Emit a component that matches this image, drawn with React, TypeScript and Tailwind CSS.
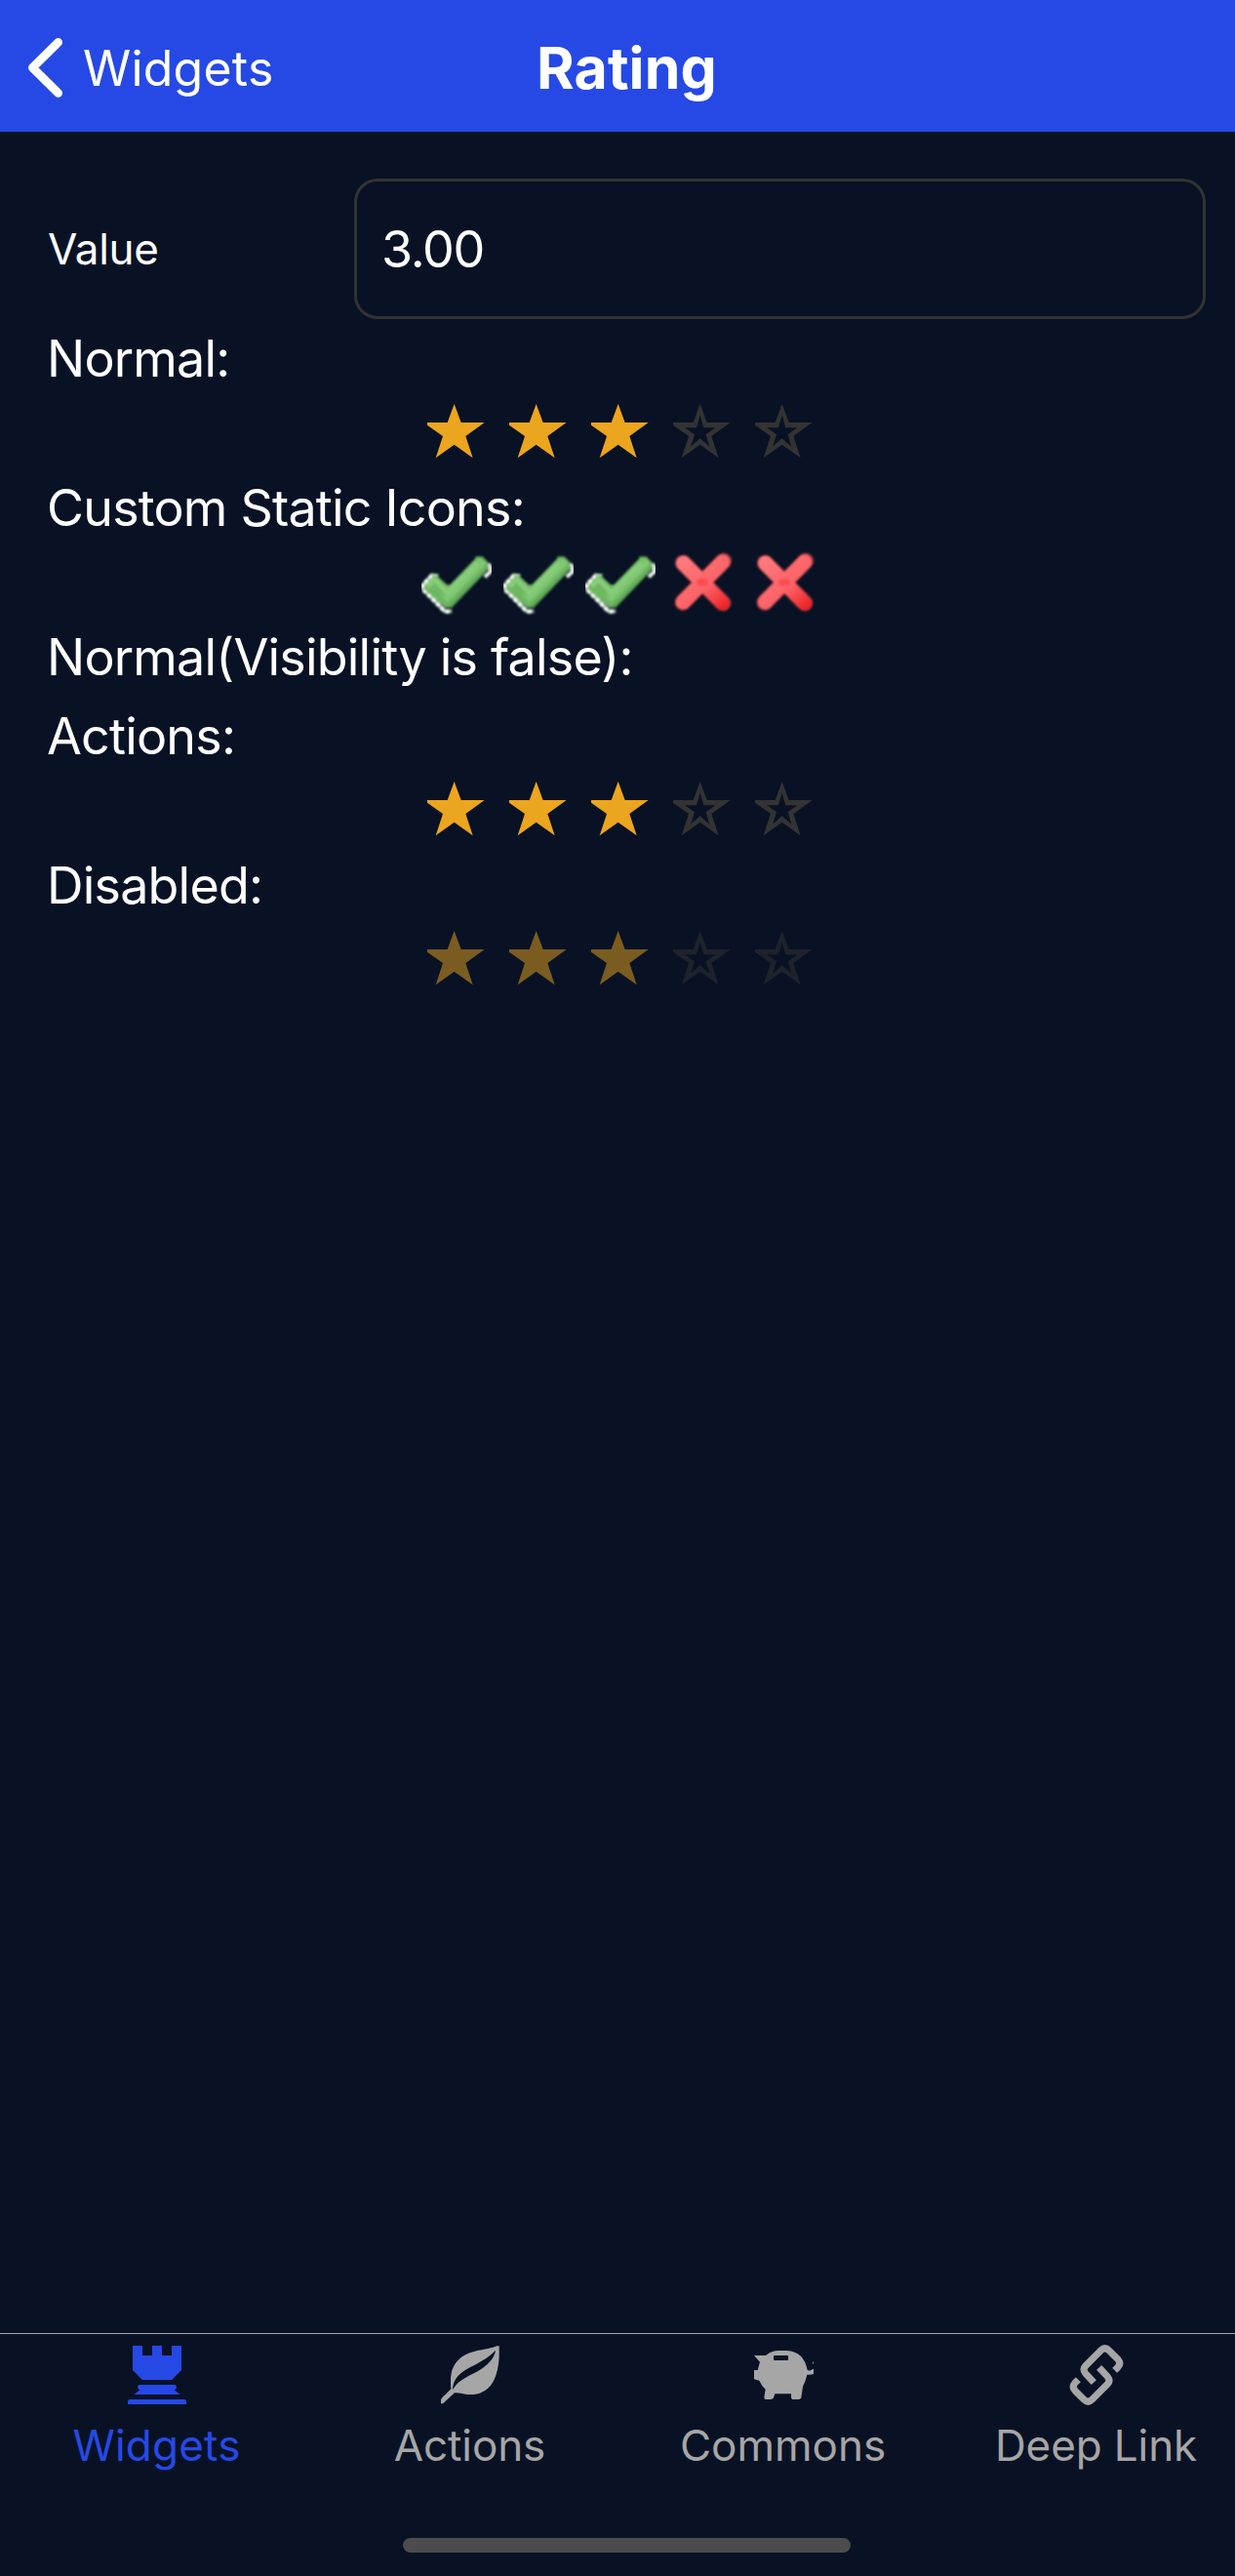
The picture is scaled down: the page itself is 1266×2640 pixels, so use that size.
import type { ReactNode } from 'react';

const STAR_OUTLINE =
  'M197 72L218 129H290L232 171L254 238L197 197L140 238L162 171L114 137V129H176Z';
const STAR_HOLE =
  'M197 106L186 145H150L180 166L168 203L197 178L226 203L215 166L244 145H208Z';

function Star({ filled }: { filled: boolean }) {
  return (
    <svg viewBox="96 54 216 216" className="size-[72px]">
      {filled ? (
        <path d={STAR_OUTLINE} fill="#eca51e" />
      ) : (
        <path d={STAR_OUTLINE + STAR_HOLE} fill="#333333" fillRule="evenodd" />
      )}
    </svg>
  );
}

function Check() {
  return (
    <svg viewBox="96 513 216 216" className="size-[72px]">
      <defs>
        <linearGradient id="tick" gradientUnits="userSpaceOnUse" x1="205" y1="600" x2="252" y2="647">
          <stop offset="0" stopColor="#6fb862" />
          <stop offset="0.45" stopColor="#84cb76" />
          <stop offset="0.75" stopColor="#5fa955" />
          <stop offset="1" stopColor="#357f30" />
        </linearGradient>
        <filter id="tickSoft" filterUnits="userSpaceOnUse" x="96" y="513" width="216" height="216">
          <feGaussianBlur stdDeviation="2.6" />
        </filter>
      </defs>
      <g filter="url(#tickSoft)">
        <path d="M148 600L128 598L102 628V642L168 709H188" fill="none" stroke="#b9d3b5" strokeWidth="11" />
        <path
          d="M128 600L100 628V642L168 710H190"
          fill="none"
          stroke="#ffffff"
          strokeWidth="12"
          strokeDasharray="11 8"
        />
        <path d="M262 545H282L305 568" fill="none" stroke="#5f9a58" strokeWidth="9" />
        <path d="M303 564L308 574V588L291 604" fill="none" stroke="#f4faf3" strokeWidth="11" />
        <path
          d="M104 632L132 600H144L174 628H184L264 545H280L304 570V578L190 698H170L104 642Z"
          fill="url(#tick)"
        />
        <path d="M114 634L136 611L176 652L268 561" fill="none" stroke="#87cd79" strokeWidth="14" />
        <path d="M124 644L174 689" fill="none" stroke="#6bb85f" strokeWidth="14" />
      </g>
    </svg>
  );
}

function Cross() {
  return (
    <svg viewBox="852 513 216 216" className="size-[72px]">
      <defs>
        <linearGradient id="cross" gradientUnits="userSpaceOnUse" x1="890" y1="540" x2="1035" y2="700">
          <stop offset="0" stopColor="#ff7d80" />
          <stop offset="0.6" stopColor="#fc6266" />
          <stop offset="1" stopColor="#ec1f22" />
        </linearGradient>
        <filter id="crossSoft" filterUnits="userSpaceOnUse" x="852" y="513" width="216" height="216">
          <feGaussianBlur stdDeviation="3.4" />
        </filter>
      </defs>
      <g filter="url(#crossSoft)" fill="none" strokeLinecap="round">
        <path d="M901 561L1023 684M1025 555L900 682" stroke="#a8363f" strokeWidth="50" />
        <path d="M902 562L1022 684M1022 558L901 681" stroke="url(#cross)" strokeWidth="45" />
        <path d="M953 620H967" stroke="#ff4c50" strokeWidth="22" />
      </g>
    </svg>
  );
}

function Rating({ render, disabled }: { render: (on: boolean) => ReactNode; disabled?: boolean }) {
  return (
    <div className={disabled ? 'flex h-[72px] gap-3 pl-[384px] opacity-50' : 'flex h-[72px] gap-3 pl-[384px]'}>
      {[1, 2, 3, 4, 5].map((n) => (
        <span key={n} className="size-[72px] shrink-0">
          {render(n <= 3)}
        </span>
      ))}
    </div>
  );
}

function Label({ children }: { children: ReactNode }) {
  return <p className="h-[81px] text-[52px] leading-[81px] tracking-[-0.8px]">{children}</p>;
}

const star = (on: boolean) => <Star filled={on} />;
const mark = (on: boolean) => (on ? <Check /> : <Cross />);

function RookIcon() {
  return (
    <svg viewBox="153 72 180 180" className="size-[60px]" fill="currentColor">
      <path d="M168 72h30v30h30V72h30v30h30V72h30v75l-30 30h-90l-30-30z" />
      <path d="M190 192h106q7 0 7 7 0 7-7 9l18 14H172l18-14q-7-2-7-9 0-7 7-7z" />
      <path d="M160 237h166q7 0 7 7v8H153v-8q0-7 7-7z" />
    </svg>
  );
}

function LeafIcon() {
  return (
    <svg viewBox="186 72 180 180" className="size-[60px]" fill="currentColor" fillRule="evenodd">
      <path d="M365 73C366 110 365 150 345 185C325 218 290 226 262 221C250 219 238 215 228 217L192 250L186 250V238Q188 232 200 222L217 205C216 190 214 170 220 148C232 112 262 95 290 89C320 83 345 79 358 73ZM354 86C330 112 300 125 275 139C245 155 224 172 222 207L226 202C240 178 270 166 300 150C330 132 352 108 354 86Z" />
    </svg>
  );
}

function PigIcon() {
  return (
    <svg viewBox="249 72 183 180" className="ml-0.5 h-[60px] w-[61px]" fill="currentColor" fillRule="evenodd">
      <path d="M249 102H285Q302 87 325 87H350Q402 90 413 147Q423 151 430 143L432 144V159Q424 162 412 161Q408 180 399 197L394 232Q392 237 386 237H367Q363 236 363 230V220H313L309 232Q307 237 300 237H284Q280 236 280 231L284 206Q272 195 265 179L249 175V147H260L267 122ZM312 102Q309 102 309 105V114Q309 117 312 117H351Q354 117 354 114V105Q354 102 351 102Z" />
      <path d="M429 123L432 121V130Z" />
    </svg>
  );
}

function LinkIcon() {
  return (
    <svg viewBox="252 72 180 180" className="size-[60px] overflow-visible" fill="none" stroke="currentColor" strokeWidth="21">
      <path d="M398 148L408 138Q419 126 408 114L381 87Q368 74 355 87L308 134Q298 145 308 157L334 185" />
      <path d="M286 176L276 186Q265 198 276 210L303 237Q316 250 329 237L376 190Q386 179 376 167L350 139" />
    </svg>
  );
}

const tabs = [
  { name: 'Widgets', icon: <RookIcon />, style: 'text-[#2649e6] tracking-[0.2px]' },
  { name: 'Actions', icon: <LeafIcon />, style: 'text-[#a6a6a6] tracking-[-0.1px]' },
  { name: 'Commons', icon: <PigIcon />, style: 'text-[#a6a6a6]' },
  { name: 'Deep Link', icon: <LinkIcon />, style: 'text-[#a6a6a6] tracking-[-0.1px]' },
];

export default function App() {
  return (
    <div className="flex h-[2640px] w-[1266px] flex-col overflow-hidden bg-[#091224] font-[Inter,sans-serif] text-white">
      <header className="flex h-[135px] shrink-0 items-center bg-[#2649e6] pt-1">
        <a className="flex w-[550px] items-center pl-6">
          <svg viewBox="72 117 144 183" className="mr-[13px] h-[61px] w-12">
            <path d="M179 130L100 208L179 286" fill="none" stroke="white" strokeWidth="26" strokeLinecap="round" strokeLinejoin="round" />
          </svg>
          <span className="text-[50px] leading-[60px] tracking-[0.2px]">Widgets</span>
        </a>
        <h1 className="text-[59px] leading-[64px] font-bold tracking-[0.1px]">Rating</h1>
      </header>

      <main className="flex-1 pt-12 pl-12">
        <div className="flex h-36 items-center">
          <label className="w-[315px] pl-px text-[44px] tracking-[-0.3px]">Value</label>
          <div className="flex h-36 w-[873px] items-center rounded-[24px] border-3 border-[#333333] pt-0.5 pl-[25px] text-[52px] tracking-[-1.3px]">
            3.00
          </div>
        </div>
        <Label>Normal:</Label>
        <Rating render={star} />
        <Label>Custom Static Icons:</Label>
        <Rating render={mark} />
        <Label>Normal(Visibility is false):</Label>
        <Label>Actions:</Label>
        <Rating render={star} />
        <Label>Disabled:</Label>
        <Rating render={star} disabled />
      </main>

      <nav className="flex h-[249px] shrink-0 flex-col border-t border-[#a5a6ad]">
        <div className="flex w-[1284px]">
          {tabs.map((tab) => (
            <a key={tab.name} className={`flex w-[321px] flex-col items-center pt-3 ${tab.style}`}>
              {tab.icon}
              <span className="mt-[15px] text-[44px] leading-[54px]">{tab.name}</span>
            </a>
          ))}
        </div>
        <div className="mt-[68px] ml-[413px] h-[15px] w-[459px] rounded-full bg-[#4c4c4c]" />
      </nav>
    </div>
  );
}
